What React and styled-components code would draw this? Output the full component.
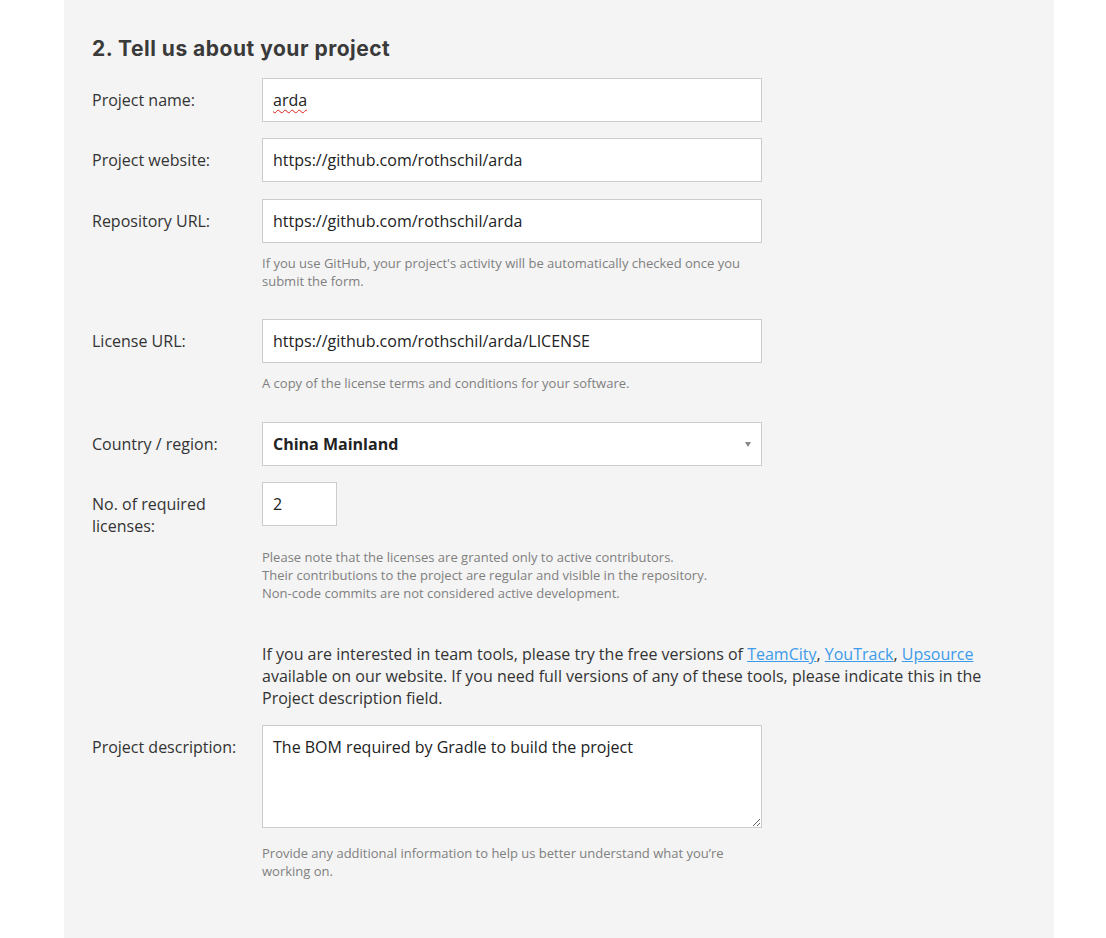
import React from "react";
import styled, { createGlobalStyle } from "styled-components";

const GlobalStyle = createGlobalStyle`
  html, body {
    margin: 0;
    padding: 0;
    background: #fff;
  }
  body {
    font-family: "Open Sans", "Noto Sans", sans-serif;
    color: #333;
  }
`;

const Page = styled.div`
  display: flex;
  justify-content: flex-start;
  padding-left: 64px;
  min-height: 938px;
`;

const Panel = styled.section`
  width: 990px;
  box-sizing: border-box;
  background: #f4f4f4;
  padding: 35px 28px 40px 28px;
`;

const Title = styled.h2`
  margin: 0 0 15px 0;
  font-family: "Inter", "Lato", sans-serif;
  font-weight: 700;
  font-size: 21px;
  line-height: 28px;
  letter-spacing: 0.5px;
  color: #3a3a3a;
`;

const Row = styled.div`
  display: grid;
  grid-template-columns: 170px 1fr;
  margin-bottom: ${(p) => p.$mb || "16px"};
`;

const Label = styled.label`
  padding: 11px 10px 0 0;
  font-size: 16px;
  line-height: 22px;
  color: #333;
`;

const Control = styled.div`
  grid-column: 2;
  position: relative;
  display: flex;
`;

const TextInput = styled.input`
  box-sizing: border-box;
  width: ${(p) => p.$width || "500px"};
  height: 44px;
  padding: 0 10px;
  border: 1px solid #cccccc;
  border-radius: 0;
  background: #fff;
  font-family: "Open Sans", sans-serif;
  font-size: 16px;
  color: #222;
  outline: none;
`;

const Squiggle = styled.span`
  position: absolute;
  left: 11px;
  top: 11px;
  font-size: 16px;
  line-height: 22px;
  color: transparent;
  text-decoration: underline wavy #e02020;
  text-decoration-thickness: 1px;
  text-underline-offset: 3px;
  pointer-events: none;
`;

const Select = styled.select`
  box-sizing: border-box;
  width: 500px;
  height: 44px;
  padding: 0 10px;
  border: 1px solid #cccccc;
  border-radius: 0;
  background: #fff;
  appearance: none;
  font-family: "Open Sans", sans-serif;
  font-size: 16px;
  font-weight: 700;
  color: #222;
  outline: none;
`;

const Arrow = styled.span`
  position: absolute;
  left: 483px;
  top: 20px;
  width: 0;
  height: 0;
  border-left: 3.5px solid transparent;
  border-right: 3.5px solid transparent;
  border-top: 5px solid #888;
  pointer-events: none;
`;

const TextArea = styled.textarea`
  box-sizing: border-box;
  width: 500px;
  height: 103px;
  padding: 10px;
  border: 1px solid #cccccc;
  border-radius: 0;
  background: #fff;
  font-family: "Open Sans", sans-serif;
  font-size: 16px;
  line-height: 22px;
  color: #222;
  outline: none;
`;

const Hint = styled.p`
  grid-column: 2;
  margin: ${(p) => p.$gap || "11px"} 0 0 0;
  max-width: 500px;
  font-size: 13px;
  line-height: 18px;
  color: #808080;
`;

const Note = styled.p`
  margin: 41px 0 16px 170px;
  font-size: 16px;
  line-height: 22px;
  color: #333;

  a {
    color: #3d9be9;
    text-decoration: underline;
  }
`;

const App = () => {
  return (
    <>
      <GlobalStyle />
      <Page>
        <Panel>
          <Title>2. Tell us about your project</Title>

          <Row>
            <Label>Project name:</Label>
            <Control>
              <TextInput defaultValue="arda" spellCheck={false} />
              <Squiggle>arda</Squiggle>
            </Control>
          </Row>

          <Row $mb="17px">
            <Label>Project website:</Label>
            <Control>
              <TextInput defaultValue="https://github.com/rothschil/arda" />
            </Control>
          </Row>

          <Row $mb="29px">
            <Label>Repository URL:</Label>
            <Control>
              <TextInput defaultValue="https://github.com/rothschil/arda" />
            </Control>
            <Hint>
              If you use GitHub, your project's activity will be automatically
              checked once you submit the form.
            </Hint>
          </Row>

          <Row $mb="30px">
            <Label>License URL:</Label>
            <Control>
              <TextInput defaultValue="https://github.com/rothschil/arda/LICENSE" />
            </Control>
            <Hint>A copy of the license terms and conditions for your software.</Hint>
          </Row>

          <Row>
            <Label>Country / region:</Label>
            <Control>
              <Select defaultValue="cn">
                <option value="cn">China Mainland</option>
              </Select>
              <Arrow />
            </Control>
          </Row>

          <Row $mb="0">
            <Label>No. of required licenses:</Label>
            <Control>
              <TextInput $width="75px" defaultValue="2" />
            </Control>
            <Hint>
              Please note that the licenses are granted only to active contributors.
              <br />
              Their contributions to the project are regular and visible in the repository.
              <br />
              Non-code commits are not considered active development.
            </Hint>
          </Row>

          <Note>
            If you are interested in team tools, please try the free versions of{" "}
            <a href="#teamcity">TeamCity</a>, <a href="#youtrack">YouTrack</a>,{" "}
            <a href="#upsource">Upsource</a> available on our website. If you need
            full versions of any of these tools, please indicate this in the Project
            description field.
          </Note>

          <Row>
            <Label>Project description:</Label>
            <Control>
              <TextArea defaultValue="The BOM required by Gradle to build the project" />
            </Control>
            <Hint $gap="16px">
              Provide any additional information to help us better understand what
              you’re working on.
            </Hint>
          </Row>
        </Panel>
      </Page>
    </>
  );
};

export default App;
